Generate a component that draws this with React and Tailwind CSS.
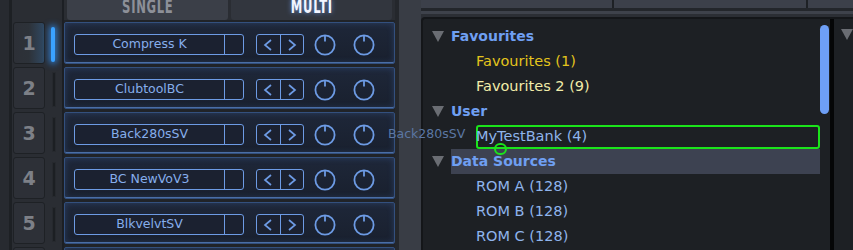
import React from 'react'

const strips = ['Compress K', 'ClubtoolBC', 'Back280sSV', 'BC NewVoV3', 'BlkvelvtSV', '']

function Knob() {
	return (
		<svg width="22" height="22" viewBox="0 0 22 22" className="shrink-0">
			<circle cx="11" cy="11" r="9.6" fill="none" stroke="#6d9be4" strokeWidth="1.8" />
			<line x1="11" y1="1.5" x2="11" y2="7.5" stroke="#6d9be4" strokeWidth="1.8" />
		</svg>
	)
}

function Arrows() {
	return (
		<div className="flex h-[21px] w-[48px] rounded-[3px] border-[1.5px] border-[#6d9be4] bg-[#1b2130]">
			<div className="flex flex-1 items-center justify-center border-r-[1.5px] border-[#6d9be4]">
				<svg width="10" height="12" viewBox="0 0 10 12">
					<polyline points="8,1 2,6 8,11" fill="none" stroke="#6d9be4" strokeWidth="1.7" />
				</svg>
			</div>
			<div className="flex flex-1 items-center justify-center">
				<svg width="10" height="12" viewBox="0 0 10 12">
					<polyline points="2,1 8,6 2,11" fill="none" stroke="#6d9be4" strokeWidth="1.7" />
				</svg>
			</div>
		</div>
	)
}

function StripRow({ name }) {
	return (
		<div className="flex h-[42px] shrink-0 items-center rounded-[2px] border border-[#33507e] bg-gradient-to-b from-[#1e2739] to-[#19202e] pl-[9px] pt-[3px] shadow-[inset_0_-1px_0_#4a6ea6,inset_0_0_6px_rgba(70,110,180,0.35)]">
			<div className="flex h-[21px] w-[170px] rounded-[3px] border-[1.5px] border-[#6d9be4] bg-[#1b2130]">
				<div className="flex flex-1 items-center justify-center border-r-[1.5px] border-[#6d9be4] text-[12.5px] text-[#86aeec]">
					{name}
				</div>
				<div className="w-[18px]" />
			</div>
			<div className="ml-[12px]">
				<Arrows />
			</div>
			<div className="ml-[10px]">
				<Knob />
			</div>
			<div className="ml-[17px]">
				<Knob />
			</div>
		</div>
	)
}

function SlotRow({ n, active }) {
	return (
		<div className="flex h-[42px] shrink-0">
			<div
				className={
					'ml-[1px] flex w-[32px] items-center justify-center rounded-[3px] border border-[#1e2125] text-[19px] font-bold text-[#7d8087] ' +
					(active ? 'bg-gradient-to-r from-[#2d3037] via-[#2d3239] to-[#2f4862]' : 'bg-[#2d3037]')
				}
			>
				{n}
			</div>
			<div className="flex w-[17px] justify-center pt-[5px] pb-[2px]">
				{active ? (
					<div className="ml-[-1px] w-[4px] rounded-full bg-[#3aa2ff] shadow-[0_0_6px_2px_rgba(50,150,255,0.7)]" />
				) : (
					<div className="w-[4px] rounded-[1px] border border-[#26292e] bg-[#1c1f23]" />
				)}
			</div>
		</div>
	)
}

function Triangle() {
	return (
		<svg width="12" height="11" viewBox="0 0 12 11" className="shrink-0">
			<polygon points="0,0 12,0 6,11" fill="#6a6d73" />
		</svg>
	)
}

function Header({ label, selected }) {
	return (
		<div className="flex h-[25px] items-center pl-[9px]">
			<Triangle />
			<div
				className={
					'ml-[7px] flex h-full flex-1 items-center text-[14px] font-bold text-[#6f9ff2] ' +
					(selected ? 'bg-[#3d4251]' : '')
				}
			>
				{label}
			</div>
		</div>
	)
}

function Item({ label, color }) {
	return (
		<div className={'flex h-[25px] items-center pl-[53px] text-[14.5px] ' + color}>{label}</div>
	)
}

const tabFont = { fontFamily: '"DejaVu Sans Condensed", "Liberation Sans Narrow", sans-serif' }

export default function App() {
	return (
		<div
			className="relative flex h-[250px] w-[853px] overflow-hidden bg-[#2b2e34]"
			style={{ fontFamily: '"DejaVu Sans", "Liberation Sans", sans-serif' }}
		>
			{/* left bezel */}
			<div className="w-[12px] shrink-0 border-r-[3px] border-[#1d2024] bg-[#272a30]" />

			{/* slot numbers and meters */}
			<div className="flex w-[50px] shrink-0 flex-col gap-[3px] bg-[#2a2d33] pt-[22px]">
				{[1, 2, 3, 4, 5, ''].map((n, i) => (
					<SlotRow key={i} n={n} active={n === 1} />
				))}
			</div>
			<div className="w-[2px] shrink-0 bg-[#1c1f24]" />

			{/* strips */}
			<div className="flex w-[331px] shrink-0 flex-col bg-[#202328]">
				<div className="flex h-[20px] shrink-0 gap-[3px] bg-[#2a2d33] px-[3px]">
					<div className="flex flex-1 items-start justify-center overflow-hidden rounded-b-[3px] bg-[#3b3f48]">
						<span
							className="mt-[-3px] scale-x-[0.68] text-[19px] font-bold leading-none tracking-[1px] text-[#8d9098]"
							style={tabFont}
						>
							SINGLE
						</span>
					</div>
					<div className="flex flex-1 items-start justify-center overflow-hidden rounded-b-[3px] bg-[#32363e]">
						<span
							className="mt-[-3px] scale-x-[0.68] text-[19px] font-bold leading-none tracking-[1px] text-[#f2f5ff] [text-shadow:0_0_6px_rgba(120,170,255,0.8)]"
							style={tabFont}
						>
							MULTI
						</span>
					</div>
				</div>
				<div className="mt-[2px] flex flex-col gap-[3px]">
					{strips.map((s, i) => (
						<StripRow key={i} name={s} />
					))}
				</div>
			</div>

			{/* gutter */}
			<div className="flex w-[26px] shrink-0">
				<div className="w-[4px] bg-[#24272c]" />
				<div className="flex-1 bg-[#393d45]" />
			</div>

			{/* browser */}
			<div className="flex min-w-0 flex-1 flex-col bg-[#2b2e34]">
				<div className="flex h-[8px] shrink-0 gap-[2px] bg-[#1e2125]">
					<div className="w-[191px] bg-[#3c404a]" />
					<div className="w-[192px] bg-[#3c404a]" />
					<div className="flex-1 bg-[#3c404a]" />
				</div>
				<div className="h-[3px] shrink-0 bg-[#23262b]" />
				<div className="h-[3px] shrink-0 bg-[#3e424b]" />
				<div className="h-[3px] shrink-0 bg-[#2b2e34]" />
				<div className="flex flex-1 rounded-tl-[4px] border-l-[2px] border-t-[2px] border-[#141619] bg-[#1d2024]">
					<div className="flex w-[397px] shrink-0 flex-col pt-[5px]">
						<Header label="Favourites" />
						<Item label="Favourites (1)" color="text-[#e3c41c]" />
						<Item label="Favourites 2 (9)" color="text-[#f1eca9]" />
						<Header label="User" />
						<div className="flex h-[25px] items-center pl-[53px]">
							<div className="relative flex h-[24px] flex-1 items-center rounded-[3px] border-[2.5px] border-[#1be41b] text-[14.5px] text-[#8fb4ec]">
								<span className="ml-[-2px]">MyTestBank (4)</span>
								<div className="absolute bottom-[-8px] left-[16px] h-[12px] w-[13px] rounded-full border-[2.5px] border-[#1be41b]" />
							</div>
						</div>
						<Header label="Data Sources" selected />
						<Item label="ROM A (128)" color="text-[#8fb4ec]" />
						<Item label="ROM B (128)" color="text-[#8fb4ec]" />
						<Item label="ROM C (128)" color="text-[#8fb4ec]" />
					</div>
					<div className="w-[10px] shrink-0 pt-[6px]">
						<div className="h-[89px] w-[9px] rounded-full bg-[#6e9ff6]" />
					</div>
					<div className="w-[4px] shrink-0 bg-[#050607]" />
					<div className="flex-1 pl-[7px] pt-[10px]">
						<Triangle />
					</div>
				</div>
			</div>

			{/* drag ghost */}
			<div className="pointer-events-none absolute left-[388px] top-[125px] text-[12.5px] text-[#5b77a3]">
				Back280sSV
			</div>
		</div>
	)
}
